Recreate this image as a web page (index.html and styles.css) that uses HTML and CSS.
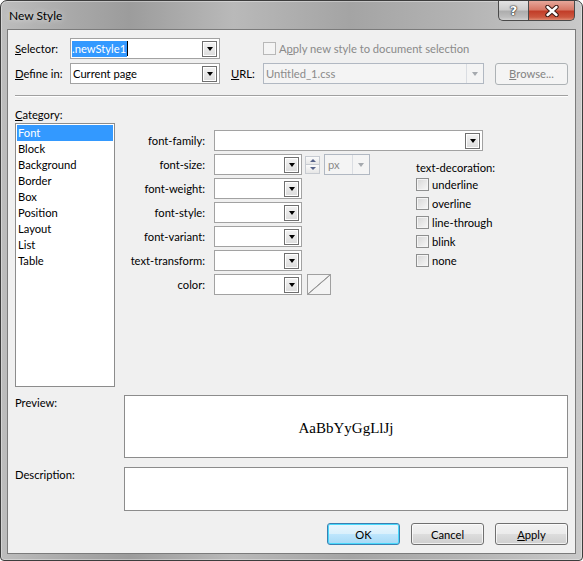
FILE: index.html
```html
<!DOCTYPE html>
<html lang="en">
<head>
  <meta charset="UTF-8">
  <title>New Style</title>
  <link rel="stylesheet" href="styles.css">
</head>
<body>

  <div class="window">
    <div class="titlebar">
      <span class="title">New Style</span>
      <div class="caption-btns">
        <div class="cap-btn cap-help">?</div>
        <div class="cap-btn cap-close">
          <svg width="14" height="12" viewBox="0 0 14 12">
            <path d="M2.5 2 L11.5 10 M11.5 2 L2.5 10" stroke="#3a1a14" stroke-width="4.4" stroke-linecap="round"/>
            <path d="M2.5 2 L11.5 10 M11.5 2 L2.5 10" stroke="#fff" stroke-width="2.4" stroke-linecap="round"/>
          </svg>
        </div>
      </div>
    </div>

    <div class="client">
      <div class="top-grid">
        <span class="lbl"><u>S</u>elector:</span>
        <div class="combo">
          <span class="val val-edit"><span class="selected">.newStyle1</span><span class="caret"></span></span>
          <span class="drop"></span>
        </div>
        <div class="apply-opt">
          <span class="chk chk-disabled"></span>
          <span class="dis-text">A<u>p</u>ply new style to document selection</span>
        </div>

        <span class="lbl"><u>D</u>efine in:</span>
        <div class="combo">
          <span class="val">Current page</span>
          <span class="drop"></span>
        </div>
        <span class="lbl lbl-url"><u>U</u>RL:</span>
        <div class="combo combo-disabled">
          <span class="val">Untitled_1.css</span>
          <span class="drop-dis"></span>
        </div>
        <span></span>
        <div class="btn btn-disabled"><u>B</u>rowse...</div>
      </div>

      <div class="separator"></div>

      <div class="cat-label"><u>C</u>ategory:</div>

      <div class="main-row">
        <ul class="cat-list">
          <li class="active">Font</li>
          <li>Block</li>
          <li>Background</li>
          <li>Border</li>
          <li>Box</li>
          <li>Position</li>
          <li>Layout</li>
          <li>List</li>
          <li>Table</li>
        </ul>

        <div class="font-form">
          <span class="f-lbl">font-family:</span>
          <div class="combo combo-family">
            <span class="val"></span>
            <span class="drop"></span>
          </div>

          <span class="f-lbl">font-size:</span>
          <div class="combo"><span class="val"></span><span class="drop"></span></div>
          <div class="extras">
            <div class="spinner">
              <span class="spin spin-up"></span>
              <span class="spin spin-down"></span>
            </div>
            <div class="combo combo-disabled combo-unit">
              <span class="val">px</span>
              <span class="drop-dis"></span>
            </div>
          </div>

          <div class="text-deco">
            <div class="td-title">text-decoration:</div>
            <label class="td-row"><span class="chk"></span>underline</label>
            <label class="td-row"><span class="chk"></span>overline</label>
            <label class="td-row"><span class="chk"></span>line-through</label>
            <label class="td-row"><span class="chk"></span>blink</label>
            <label class="td-row"><span class="chk"></span>none</label>
          </div>

          <span class="f-lbl">font-weight:</span>
          <div class="combo"><span class="val"></span><span class="drop"></span></div>

          <span class="f-lbl">font-style:</span>
          <div class="combo"><span class="val"></span><span class="drop"></span></div>

          <span class="f-lbl">font-variant:</span>
          <div class="combo"><span class="val"></span><span class="drop"></span></div>

          <span class="f-lbl">text-transform:</span>
          <div class="combo"><span class="val"></span><span class="drop"></span></div>

          <span class="f-lbl">color:</span>
          <div class="combo"><span class="val"></span><span class="drop"></span></div>
          <div class="extras">
            <span class="swatch"></span>
          </div>
        </div>
      </div>

      <div class="box-row preview-row">
        <span class="lbl">Preview:</span>
        <div class="panel preview">AaBbYyGgLlJj</div>
      </div>

      <div class="box-row desc-row">
        <span class="lbl">Description:</span>
        <div class="panel description"></div>
      </div>

      <div class="buttons">
        <div class="btn btn-default">OK</div>
        <div class="btn">Cancel</div>
        <div class="btn"><u>A</u>pply</div>
      </div>
    </div>
  </div>

</body>
</html>
```

FILE: styles.css
```css
* {
  box-sizing: border-box;
}

body {
  margin: 0;
  font-family: "Segoe UI", Lato, "Liberation Sans", sans-serif;
  font-size: 11.2px;
  line-height: 15px;
  color: #000;
}

.window {
  width: 583px;
  height: 561px;
  display: flex;
  flex-direction: column;
  padding: 0 6px 6px;
  border: 1px solid #3d3d3d;
  border-radius: 7px 7px 4px 4px;
  background: linear-gradient(to right, #bdbdbd 0%, #a9a9a9 12%, #9c9c9c 22%, #b9b9b9 40%, #a4a4a4 60%, #b4b4b4 80%, #c9c9c9 100%);
  box-shadow: inset 0 0 0 1px rgba(255, 255, 255, 0.35);
}

/* title bar */
.titlebar {
  height: 28px;
  display: flex;
  align-items: flex-start;
}

.title {
  margin: 7px 0 0 2px;
  font-size: 12px;
  color: #000;
  text-shadow: 0 0 6px rgba(255, 255, 255, 0.8);
}

.caption-btns {
  margin: 0 1px 0 auto;
  display: flex;
}

.cap-btn {
  height: 20px;
  display: flex;
  align-items: center;
  justify-content: center;
  border: 1px solid #4a4a4a;
  border-top: none;
}

.cap-help {
  width: 30px;
  border-radius: 0 0 0 5px;
  border-right: none;
  background: linear-gradient(#e2e2e2, #cdcdcd 45%, #aeaeae 55%, #bdbdbd 85%, #d2d2d2);
  color: #fff;
  font-family: "DejaVu Sans", sans-serif;
  font-weight: bold;
  font-size: 13px;
  text-shadow: 0 0 1px #222, 0 0 1px #222, 0 0 2px #333;
}

.cap-close {
  width: 47px;
  border-radius: 0 0 5px 0;
  background: linear-gradient(#e6a79a, #d77866 45%, #c23e29 55%, #cc573f 85%, #df8b73);
}

/* client area */
.client {
  flex: 1;
  display: flex;
  flex-direction: column;
  padding: 8px 7px 8px;
  background: #f0f0f0;
  border: 1px solid #7b7b7b;
}

.top-grid {
  display: grid;
  grid-template-columns: 55px 150px 43px 221px 11px 73px;
  grid-template-rows: 21px 21px;
  row-gap: 4px;
  align-items: center;
}

.lbl-url {
  padding-left: 11px;
}

.apply-opt {
  grid-column: 4 / 7;
  display: flex;
  align-items: center;
  gap: 3px;
}

.dis-text {
  color: #8a8a8a;
}

/* combo boxes */
.combo {
  height: 21px;
  display: flex;
  align-items: center;
  background: #fff;
  border: 1px solid #a2a2a2;
}

.val {
  flex: 1;
  padding-left: 2px;
  white-space: nowrap;
  overflow: hidden;
}

.val-edit {
  padding-left: 1px;
  display: flex;
  align-items: center;
}

.selected {
  background: #3399ff;
  color: #fff;
  line-height: 16px;
  padding-right: 1px;
}

.caret {
  width: 1px;
  height: 15px;
  background: #000;
}

.drop {
  width: 15px;
  height: 16px;
  margin-right: 2px;
  display: flex;
  align-items: center;
  justify-content: center;
  border: 1px solid #6f6f6f;
  background: linear-gradient(#f3f3f3, #dcdcdc);
  box-shadow: inset 0 0 0 1px #fff;
}

.drop::after {
  content: "";
  border-left: 3.5px solid transparent;
  border-right: 3.5px solid transparent;
  border-top: 4px solid #000;
  margin-top: 1px;
}

.combo-disabled {
  background: #f4f4f4;
  border-color: #b1b8c2;
  color: #8a8a8a;
}

.drop-dis {
  width: 17px;
  height: 19px;
  display: flex;
  align-items: center;
  justify-content: center;
  border-left: 1px solid #dadde2;
}

.drop-dis::after {
  content: "";
  border-left: 3.5px solid transparent;
  border-right: 3.5px solid transparent;
  border-top: 4px solid #a5a9ae;
}

/* buttons */
.btn {
  height: 22px;
  width: 73px;
  display: flex;
  align-items: center;
  justify-content: center;
  border: 1px solid #707070;
  border-radius: 3px;
  background: linear-gradient(#f2f2f2, #ebebeb 50%, #dddddd 50%, #cfcfcf);
  box-shadow: inset 0 0 0 1px rgba(255, 255, 255, 0.7);
}

.btn-default {
  border-color: #3c7fb1;
  background: linear-gradient(#eaf6fd, #d9f0fc 50%, #bee6fd 50%, #a7d9f5);
  box-shadow: inset 0 0 0 1px #48d8fb;
}

.btn-disabled {
  background: #f4f4f4;
  border-color: #adb2b5;
  color: #838383;
  box-shadow: none;
}

/* checkboxes */
.chk {
  width: 13px;
  height: 13px;
  flex: none;
  border: 1px solid #8e8f8f;
  background: linear-gradient(135deg, #d6d6d6, #f8f8f8);
  box-shadow: inset 0 0 0 1px #f4f4f4;
}

.chk-disabled {
  border-color: #b8b8b8;
  background: #f4f4f4;
  box-shadow: none;
}

.separator {
  margin-top: 11px;
  border-top: 1px solid #a0a0a0;
  border-bottom: 1px solid #fff;
}

.cat-label {
  margin-top: 10px;
}

/* category + font form */
.main-row {
  margin-top: 1px;
  display: flex;
}

.cat-list {
  width: 100px;
  height: 264px;
  margin: 0;
  padding: 1px;
  list-style: none;
  background: #fff;
  border: 1px solid #8c8c8c;
}

.cat-list li {
  height: 16px;
  line-height: 16px;
  padding-left: 1px;
}

.cat-list li.active {
  background: #3399ff;
  color: #fff;
}

.font-form {
  margin-top: 7px;
  display: grid;
  grid-template-columns: 99px 88px 114px auto;
  grid-auto-rows: 21px;
  row-gap: 3px;
  align-content: start;
}

.f-lbl {
  grid-column: 1;
  align-self: center;
  padding-right: 9px;
  text-align: right;
  white-space: nowrap;
}

.combo-family {
  grid-column: 2 / 5;
  width: 269px;
}

.extras {
  display: flex;
  align-items: center;
}

.spinner {
  width: 15px;
  height: 18px;
  margin-left: 3px;
  display: flex;
  flex-direction: column;
}

.spin {
  flex: 1;
  display: flex;
  align-items: center;
  justify-content: center;
  border: 1px solid #c7cbd1;
  background: linear-gradient(#fbfbfb, #e6e6e6);
}

.spin-down {
  border-top: none;
}

.spin-up::after {
  content: "";
  border-left: 3px solid transparent;
  border-right: 3px solid transparent;
  border-bottom: 3px solid #56638a;
}

.spin-down::after {
  content: "";
  border-left: 3px solid transparent;
  border-right: 3px solid transparent;
  border-top: 3px solid #56638a;
}

.combo-unit {
  width: 46px;
  margin-left: 4px;
}

.combo-unit .val {
  padding-left: 3px;
}

.swatch {
  width: 24px;
  height: 21px;
  margin-left: 5px;
  border: 1px solid #a0a0a0;
  background: linear-gradient(to bottom right, transparent 47%, #9a9a9a 49%, #9a9a9a 51%, transparent 53%), #f4f4f4;
}

.text-deco {
  grid-column: 4;
  grid-row: 2 / 8;
  padding-top: 6px;
}

.td-row {
  height: 19px;
  display: flex;
  align-items: center;
  gap: 3px;
}

/* preview & description */
.box-row {
  display: grid;
  grid-template-columns: 109px 1fr;
}

.preview-row {
  margin-top: 8px;
}

.desc-row {
  margin-top: 9px;
}

.panel {
  background: #fff;
  border: 1px solid #8c8c8c;
}

.preview {
  height: 63px;
  display: flex;
  align-items: center;
  justify-content: center;
  padding-top: 3px;
  font-family: "Times New Roman", "Liberation Serif", serif;
  font-size: 15px;
}

.description {
  height: 44px;
}

.buttons {
  margin-top: 12px;
  display: flex;
  justify-content: flex-end;
  gap: 11px;
}
```
